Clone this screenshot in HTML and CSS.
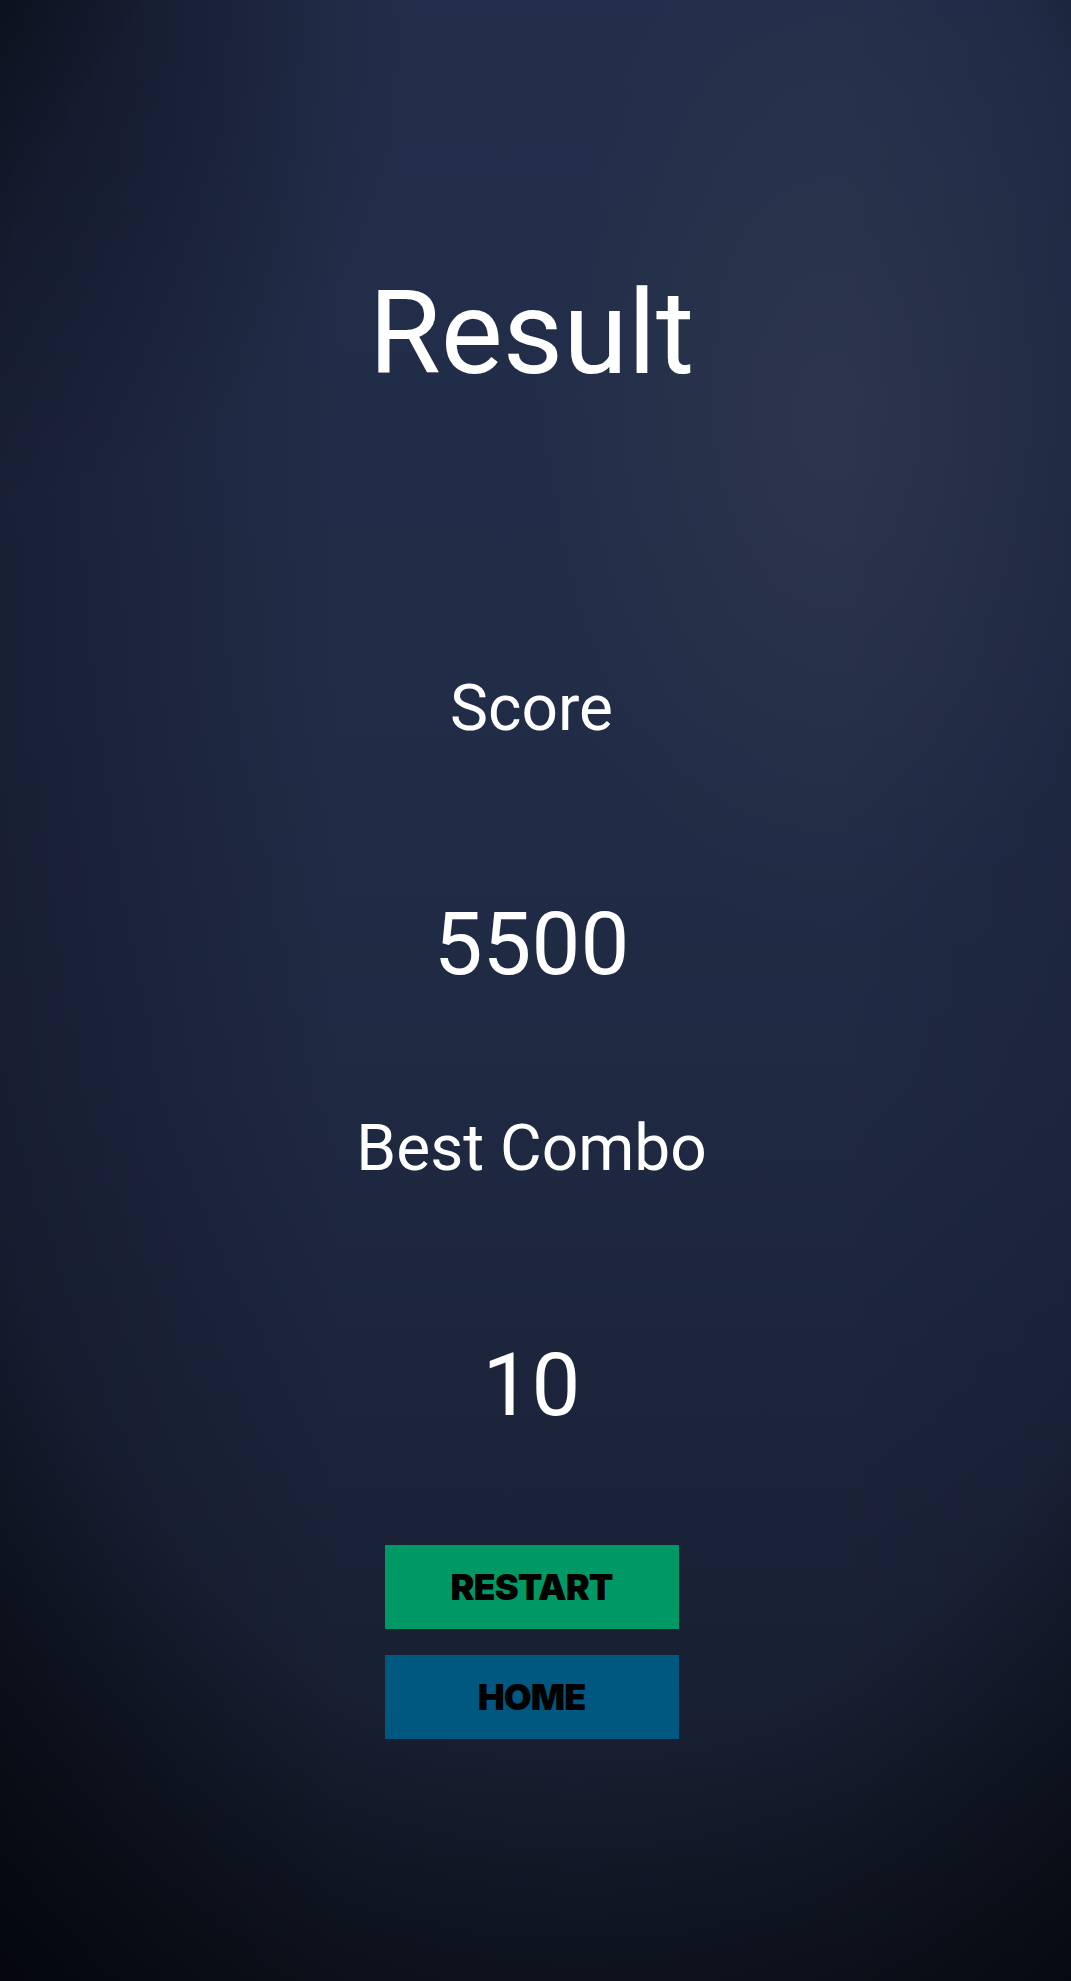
FILE: index.html
```html
<!DOCTYPE html>
<html>
<head>
<meta charset="utf-8">
<link rel="stylesheet" href="styles.css">
</head>
<body>
<main class="screen">
  <h1 class="title">Result</h1>
  <div class="label label-score">Score</div>
  <div class="value value-score">5500</div>
  <div class="label label-combo">Best Combo</div>
  <div class="value value-combo">10</div>
  <div class="buttons">
    <button class="btn btn-restart">RESTART</button>
    <button class="btn btn-home">HOME</button>
  </div>
</main>
</body>
</html>
```
FILE: styles.css
```css
html, body {
  margin: 0;
  padding: 0;
}
body {
  width: 1071px;
  height: 1981px;
  overflow: hidden;
  font-family: Roboto, "Noto Sans", sans-serif;
  color: #ffffff;
  background-color: #1f2942;
  background-image:
    radial-gradient(ellipse 300px 520px at 830px 420px, rgba(58, 64, 80, 0.45), rgba(58, 64, 80, 0) 100%),
    radial-gradient(ellipse 1000px 1500px at 580px 760px, rgba(3, 5, 10, 0) 0%, rgba(3, 5, 10, 0) 66%, rgba(3, 5, 10, 0.5) 85%, rgba(3, 5, 10, 0.9) 100%),
    radial-gradient(ellipse 420px 500px at 0px 0px, rgba(10, 13, 24, 0.5), rgba(10, 13, 24, 0) 100%),
    linear-gradient(90deg, rgba(10, 13, 24, 0.4) 0%, rgba(10, 13, 24, 0) 32%, rgba(10, 13, 24, 0) 78%, rgba(10, 13, 24, 0.12) 100%),
    linear-gradient(180deg, #222e4b 0%, #212c47 35%, #1f2942 55%, #1b243a 72%, #141b2a 100%);
}
.screen {
  display: flex;
  flex-direction: column;
  align-items: center;
  padding-right: 8px;
}
.title {
  margin: 275px 0 0;
  font-size: 117px;
  font-weight: 400;
  line-height: 117px;
}
.label {
  font-size: 64px;
  line-height: 64px;
}
.value {
  font-size: 87px;
  line-height: 87px;
}
.label-score { margin-top: 285px; }
.value-score { margin-top: 160px; }
.label-combo { margin-top: 129px; }
.value-combo { margin-top: 161px; }
.buttons {
  margin-top: 116px;
  display: flex;
  flex-direction: column;
  gap: 26px;
}
.btn {
  width: 294px;
  height: 84px;
  border: 0;
  padding: 0;
  font-family: Inter, "Liberation Sans", sans-serif;
  font-weight: 900;
  font-size: 36px;
  letter-spacing: -1px;
  color: #000000;
  display: flex;
  align-items: center;
  justify-content: center;
}
.btn-restart { background: #009966; }
.btn-home { background: #00577f; }
```
